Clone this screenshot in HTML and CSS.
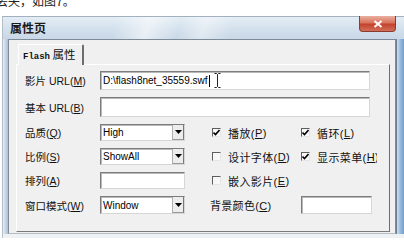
FILE: index.html
```html
<!DOCTYPE html>
<html lang="zh">
<head>
<meta charset="utf-8">
<link rel="stylesheet" href="styles.css">
</head>
<body>
<div class="clip"><p class="cut">丢失，如图7。</p></div>
<div class="window">
  <div class="titlebar">
    <span class="title">属性页</span>
    <span class="close"><svg width="10" height="8" viewBox="0 0 10 8"><path d="M1.5 1 L8.5 7 M8.5 1 L1.5 7" stroke="#fff" stroke-width="2" fill="none"/></svg></span>
  </div>
  <div class="wbody">
    <div class="lframe"></div>
    <div class="client">
      <div class="tabs"><div class="tab"><span class="mono">Flash</span> 属性</div></div>
      <div class="panel">
        <div class="grid">
          <div class="lbl r1">影片 URL(<u>M</u>)</div>
          <div class="box wide r1"><span>D:\flash8net_35559.swf</span><span class="caret"></span>
            <svg class="ibeam" width="7" height="15" viewBox="0 0 7 15"><path d="M0.5 0.5 H2.5 L3.5 1.5 L4.5 0.5 H6.5 M3.5 1.5 V13.5 M0.5 14.5 H2.5 L3.5 13.5 L4.5 14.5 H6.5" stroke="#222" stroke-width="1" fill="none"/></svg>
          </div>

          <div class="lbl r2">基本 URL(<u>B</u>)</div>
          <div class="box wide r2"></div>

          <div class="lbl r3">品质(<u>Q</u>)</div>
          <div class="box sel r3"><span class="val">High</span><span class="btn"><svg width="7" height="4" viewBox="0 0 7 4"><path d="M0 0 H7 L3.5 4 Z" fill="#000"/></svg></span></div>
          <div class="chk c4 r3"><span class="cb"><svg width="7" height="7" viewBox="0 0 7 7"><path d="M0.5 3.5 L2.5 5.5 L6.5 1" stroke="#000" stroke-width="1.6" fill="none"/></svg></span>播放(<u>P</u>)</div>
          <div class="chk c5 r3"><span class="cb"><svg width="7" height="7" viewBox="0 0 7 7"><path d="M0.5 3.5 L2.5 5.5 L6.5 1" stroke="#000" stroke-width="1.6" fill="none"/></svg></span>循环(<u>L</u>)</div>

          <div class="lbl r4">比例(<u>S</u>)</div>
          <div class="box sel r4"><span class="val">ShowAll</span><span class="btn"><svg width="7" height="4" viewBox="0 0 7 4"><path d="M0 0 H7 L3.5 4 Z" fill="#000"/></svg></span></div>
          <div class="chk c4 r4"><span class="cb"></span>设计字体(<u>D</u>)</div>
          <div class="chk c5 r4 clipw"><span class="cb"><svg width="7" height="7" viewBox="0 0 7 7"><path d="M0.5 3.5 L2.5 5.5 L6.5 1" stroke="#000" stroke-width="1.6" fill="none"/></svg></span>显示菜单(<u>H</u>)</div>

          <div class="lbl r5">排列(<u>A</u>)</div>
          <div class="box small r5"></div>
          <div class="chk c4 r5"><span class="cb"></span>嵌入影片(<u>E</u>)</div>

          <div class="lbl r6">窗口模式(<u>W</u>)</div>
          <div class="box sel r6"><span class="val">Window</span><span class="btn"><svg width="7" height="4" viewBox="0 0 7 4"><path d="M0 0 H7 L3.5 4 Z" fill="#000"/></svg></span></div>
          <div class="lbl2 c4 r6">背景颜色(<u>C</u>)</div>
          <div class="box color c5 r6"></div>
        </div>
      </div>
    </div>
    <div class="rframe"></div>
  </div>
  <div class="bframe"></div>
</div>
</body>
</html>
```
FILE: styles.css
```css
* { box-sizing: border-box; }
html, body { margin: 0; padding: 0; background: #fff; }
body {
  width: 404px;
  height: 243px;
  overflow: hidden;
  font-family: "Liberation Sans", "Noto Sans CJK SC", sans-serif;
  color: #111;
}
.clip { height: 9px; overflow: hidden; }
.cut {
  margin: -5px 0 0 -4px;
  font-size: 12px;
  line-height: 12px;
  font-family: "Noto Sans CJK SC", sans-serif;
  color: #222;
  white-space: nowrap;
}
.window {
  margin: 7px 0 0 2px;
  width: 402px;
  height: 222px;
  border-top: 1px solid #a3b0bd;
  border-left: 1px solid #b3bfcb;
  display: flex;
  flex-direction: column;
  background: #dfe8f0;
}
.titlebar {
  height: 22px;
  display: flex;
  align-items: flex-start;
  background:
    linear-gradient(105deg, rgba(255,255,255,0) 28%, rgba(255,255,255,.55) 36%, rgba(255,255,255,0) 44%, rgba(255,255,255,.4) 50%, rgba(255,255,255,0) 57%),
    linear-gradient(#e4edf5, #d3e0ec 55%, #c9d8e7);
}
.title {
  padding-left: 7px;
  line-height: 22px;
  font-size: 12px;
  font-weight: bold;
  font-family: "Noto Sans CJK SC", sans-serif;
  color: #1a1a1a;
}
.close {
  margin-left: auto;
  margin-right: 8px;
  margin-top: -1px;
  width: 37px;
  height: 16px;
  display: flex;
  align-items: center;
  justify-content: center;
  border: 1px solid #8c3b2e;
  border-top: none;
  border-radius: 0 0 4px 4px;
  background: linear-gradient(#eab0a0, #d8745e 45%, #c4432c 55%, #d0705a);
}
.wbody { display: flex; height: 195px; }
.lframe { width: 5px; background: linear-gradient(to right, #e6edf4, #aebfd0); }
.rframe { flex: 1; background: linear-gradient(to right, #6f7f8f 0, #6f7f8f 1px, #cbdeef 1px, #92b7da 60%, #729dcc); }
.bframe { flex: 1; background: #eef2f5; }
.client {
  width: 388px;
  background: #f0f0f0;
  border: 1px solid #7d8a97;
  border-bottom-color: #b5bcc4;
}
.tabs { height: 24px; padding: 4px 0 0 9px; display: flex; }
.tab {
  position: relative;
  z-index: 1;
  width: 66px;
  height: 21px;
  background: #f0f0f0;
  border-top: 1px solid #fff;
  border-left: 1px solid #fff;
  border-right: 2px solid #6e6e6e;
  border-top-right-radius: 2px;
  padding-left: 4px;
  line-height: 18px;
  font-size: 11.5px;
  font-family: "Noto Sans CJK SC", sans-serif;
  color: #111;
  white-space: nowrap;
}
.mono {
  font-family: "Liberation Mono", monospace;
  font-size: 9px;
  font-weight: bold;
}
.panel {
  margin-left: 7px;
  width: 374px;
  height: 168px;
  border-top: 1px solid #fff;
  border-left: 1px solid #fff;
  border-right: 1px solid #6e6e6e;
  border-bottom: 1px solid #7a7a7a;
  padding: 6px 0 0 8px;
}
.grid {
  display: grid;
  grid-template-columns: 75px 85px 25px 91px 80px;
  grid-template-rows: 19px 20px 17px 17px 17px 18px;
  row-gap: 7px;
}
.lbl {
  grid-column: 1;
  align-self: center;
  font-size: 10.5px;
  white-space: nowrap;
  color: #111;
}
.lbl2 {
  align-self: center;
  font-size: 11px;
  letter-spacing: 0.3px;
  white-space: nowrap;
}
u { text-underline-offset: 1px; text-decoration-thickness: 1px; }
.box {
  grid-column: 2;
  position: relative;
  height: 100%;
  background: #fff;
  border: 1px solid;
  border-color: #7c7c7c #d6d6d6 #d6d6d6 #7c7c7c;
  box-shadow: inset 1px 1px 0 #b8b8b8;
  font-size: 10px;
  color: #000;
  display: flex;
  align-items: center;
  padding-left: 2px;
  white-space: nowrap;
}
.wide { grid-column: 2 / span 4; width: 270px; }
.small { width: 85px; }
.color { width: 71px; }
.caret { display: inline-block; width: 1px; height: 12px; background: #000; margin-left: 1px; }
.ibeam { position: absolute; left: 113px; top: 1px; }
.sel { width: 85px; padding-right: 0; }
.val { flex: 1; }
.btn {
  width: 12px;
  height: 100%;
  display: flex;
  align-items: center;
  justify-content: center;
  background: #ededed;
  border-left: 1px solid #b0b0b0;
  border-right: 1px solid #777;
  border-bottom: 1px solid #999;
}
.chk {
  display: flex;
  align-items: center;
  padding-left: 2px;
  font-size: 11px;
  letter-spacing: 0.4px;
  white-space: nowrap;
  color: #111;
}
.chk.c5 { padding-left: 0; }
.clipw { width: 76px; overflow: hidden; }
.cb {
  flex: none;
  width: 9px;
  height: 9px;
  margin-right: 7px;
  background: #f8f8f8;
  border-top: 1px solid #5e5e5e;
  border-left: 1px solid #5e5e5e;
  border-right: 1px solid #e6e6e6;
  border-bottom: 1px solid #e6e6e6;
  display: flex;
  align-items: center;
  justify-content: center;
}
.r1 { grid-row: 1; } .r2 { grid-row: 2; } .r3 { grid-row: 3; }
.r4 { grid-row: 4; } .r5 { grid-row: 5; } .r6 { grid-row: 6; }
.grid .c4 { grid-column: 4; }
.grid .c5 { grid-column: 5; }
```
